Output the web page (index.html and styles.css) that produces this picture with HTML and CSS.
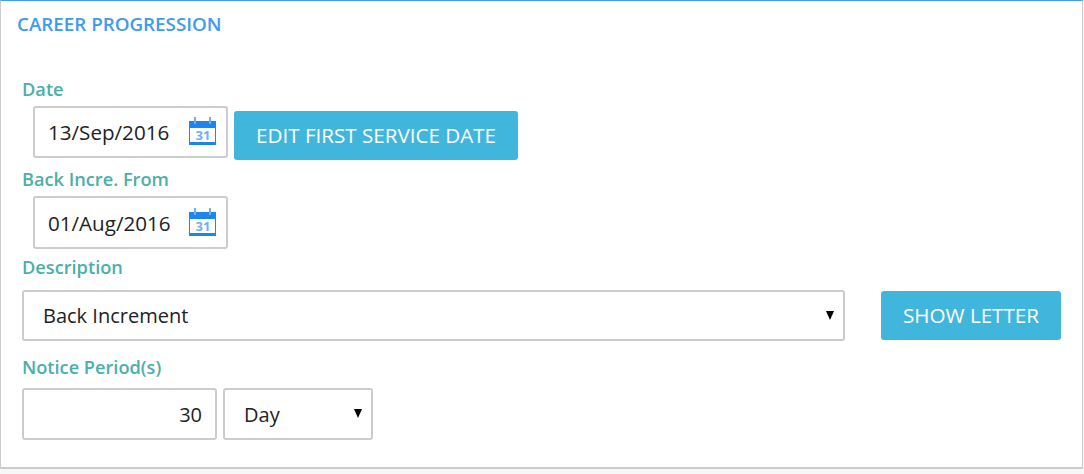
FILE: index.html
```html
<!DOCTYPE html>
<html lang="en">
<head>
  <meta charset="UTF-8">
  <title>Career Progression</title>
  <link rel="stylesheet" href="styles.css">
</head>
<body>
  <div class="panel">
    <h2 class="panel-title">CAREER PROGRESSION</h2>

    <label class="field-label first">Date</label>
    <div class="row row-date">
      <div class="date-box">
        <input class="date-input" type="text" value="13/Sep/2016">
        <svg class="cal-icon" viewBox="0 0 27 28">
          <rect x="0" y="4" width="27" height="24" fill="#1c86ee"/>
          <rect x="1" y="11" width="25" height="14" fill="#fff"/>
          <rect x="5" y="0" width="2" height="7" fill="#6db0f5"/>
          <rect x="20" y="0" width="2" height="7" fill="#6db0f5"/>
          <text x="14" y="23" text-anchor="middle" class="cal-num">31</text>
        </svg>
      </div>
      <button class="action-btn edit-btn">EDIT FIRST SERVICE DATE</button>
    </div>

    <label class="field-label back">Back Incre. From</label>
    <div class="row row-date">
      <div class="date-box tall">
        <input class="date-input" type="text" value="01/Aug/2016">
        <svg class="cal-icon" viewBox="0 0 27 28">
          <rect x="0" y="4" width="27" height="24" fill="#1c86ee"/>
          <rect x="1" y="11" width="25" height="14" fill="#fff"/>
          <rect x="5" y="0" width="2" height="7" fill="#6db0f5"/>
          <rect x="20" y="0" width="2" height="7" fill="#6db0f5"/>
          <text x="14" y="23" text-anchor="middle" class="cal-num">31</text>
        </svg>
      </div>
    </div>

    <label class="field-label desc">Description</label>
    <div class="row row-desc">
      <div class="select-wrap wide">
        <select class="select-box"><option>Back Increment</option></select>
      </div>
      <button class="action-btn letter-btn">SHOW LETTER</button>
    </div>

    <label class="field-label notice">Notice Period(s)</label>
    <div class="row row-notice">
      <input class="num-input" type="text" value="30">
      <div class="select-wrap small">
        <select class="select-box"><option>Day</option></select>
      </div>
    </div>
  </div>
</body>
</html>
```

FILE: styles.css
```css
html, body {
  margin: 0;
  padding: 0;
}
body {
  background-color: #f7f7f7;
  font-family: "Open Sans", "Noto Sans", sans-serif;
  color: #222;
  height: 474px;
  overflow: hidden;
}
.panel {
  box-sizing: border-box;
  width: 1083px;
  height: 469px;
  background-color: #fff;
  border: 1px solid #ccc;
  border-top: 1px solid #3d9bf0;
  border-bottom: 2px solid #ccc;
  padding: 0 0 0 21px;
}
.panel-title {
  margin: 13px 0 0 -5px;
  font-size: 18.8px;
  line-height: 21px;
  font-weight: 600;
  color: #3d9bf0;
}
.field-label {
  display: block;
  font-size: 18.2px;
  line-height: 20px;
  font-weight: 600;
  color: #4bafa9;
}
.field-label.first { margin-top: 44px; }
.field-label.back { margin-top: 9px; }
.field-label.desc { margin-top: 8px; }
.field-label.notice { margin-top: 16px; }
.row {
  display: flex;
  align-items: flex-start;
}
.row-date {
  padding-left: 11px;
  margin-top: 7px;
}
.row-desc {
  margin-top: 13px;
}
.row-notice {
  margin-top: 11px;
  gap: 6px;
}
.date-box {
  box-sizing: border-box;
  display: flex;
  align-items: center;
  width: 195px;
  height: 52px;
  border: 2px solid #ccc;
  border-radius: 3px;
  background-color: #fff;
  padding-right: 10px;
}
.date-box.tall { height: 53px; }
.date-input {
  flex: 1;
  min-width: 0;
  border: none;
  outline: none;
  padding: 0 0 0 13px;
  font-family: inherit;
  font-size: 20.6px;
  color: #222;
  background: transparent;
}
.cal-icon {
  width: 27px;
  height: 28px;
  flex-shrink: 0;
  margin-top: -2px;
}
.cal-num {
  font-family: "Open Sans", sans-serif;
  font-size: 13px;
  font-weight: 700;
  fill: #6db0f5;
}
.action-btn {
  border: none;
  border-radius: 3px;
  background-color: #41b6dc;
  color: #fff;
  font-family: inherit;
  font-size: 20.6px;
  height: 49px;
  padding: 0 0 2px;
}
.edit-btn {
  width: 284px;
  margin: 5px 0 0 6px;
}
.letter-btn {
  width: 180px;
  margin: 1px 0 0 36px;
}
.select-wrap {
  position: relative;
  flex-shrink: 0;
}
.select-wrap::after {
  content: "";
  position: absolute;
  top: 21px;
  right: 11px;
  border-left: 4px solid transparent;
  border-right: 4px solid transparent;
  border-top: 9px solid #000;
}
.select-wrap.wide { width: 823px; }
.select-wrap.small { width: 150px; }
.select-box {
  box-sizing: border-box;
  display: block;
  width: 100%;
  height: 51px;
  border: 2px solid #ccc;
  border-radius: 3px;
  background-color: #fff;
  padding: 0 0 0 19px;
  font-family: inherit;
  font-size: 20px;
  color: #222;
  appearance: none;
  outline: none;
}
.small .select-box { height: 52px; }
.num-input {
  box-sizing: border-box;
  width: 195px;
  height: 52px;
  border: 2px solid #ccc;
  border-radius: 3px;
  padding: 0 13px 0 0;
  font-family: inherit;
  font-size: 20px;
  color: #222;
  text-align: right;
  outline: none;
}
```
